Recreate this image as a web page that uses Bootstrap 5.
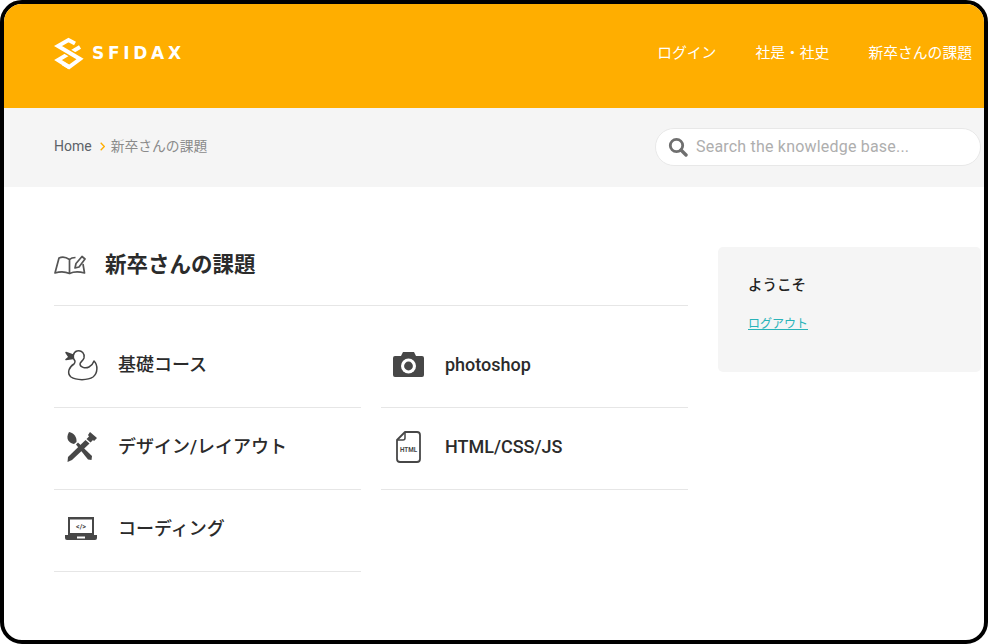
<!DOCTYPE html>
<html lang="ja">
<head>
  <meta charset="UTF-8" />
  <title>新卒さんの課題</title>
  <link href="https://cdn.jsdelivr.net/npm/bootstrap@5.3.0/dist/css/bootstrap.min.css" rel="stylesheet">
  <style>
    html, body {
      height: 100%;
      margin: 0;
      overflow: hidden;
      background: #fff;
      font-family: Roboto, "Noto Sans CJK JP", sans-serif;
    }

    .frame-box {
      height: 644px;
      border: 4px solid #000;
      border-radius: 22px;
      overflow: hidden;
      background: #fff;
    }

    .site-head {
      height: 104px;
      background: #ffae00;
      padding: 0 12px 6px 50px;
    }

    .logo-text {
      font-family: "DejaVu Sans", sans-serif;
      font-size: 17px;
      font-weight: 700;
      letter-spacing: 3.700px;
      color: #fff;
      line-height: 1;
    }

    .head-nav { column-gap: 39px; }

    .head-link {
      color: #fff;
      font-size: 14.800px;
      text-decoration: none;
    }

    .crumb-band {
      height: 79px;
      background: #f5f5f5;
      padding: 0 3px 2px 50px;
    }

    .crumb-home { color: #5c6268; font-size: 14px; text-decoration: none; }
    .crumb-now { color: #8a8a8a; font-size: 13.800px; margin-left: 6px; }

    .search-pill {
      width: 326px;
      height: 38px;
      margin-top: 1px;
      background: #fff;
      border: 1px solid #e8e8e8;
      border-radius: 20px;
      padding-left: 12px;
      column-gap: 6px;
    }

    .search-pill input {
      border: 0;
      outline: 0;
      background: transparent;
      flex: 1;
      min-width: 0;
      font-size: 16px;
      letter-spacing: .2px;
      color: #444;
    }

    .search-pill input::placeholder { color: #aeaeae; opacity: 1; }

    .main-wrap {
      padding: 60px 3px 0 50px;
      gap: 30px;
    }

    .main-col { width: 634px; }

    .title-row {
      height: 59px;
      border-bottom: 1px solid #e6e6e6;
      padding-bottom: 22px;
      margin-bottom: 20px;
    }

    .title-text {
      font-size: 21.500px;
      font-weight: 700;
      color: #2b2b2b;
      margin: 0 0 0 19px;
    }

    .topic-grid {
      display: grid;
      grid-template-columns: 307px 307px;
      column-gap: 20px;
    }

    .topic-item {
      height: 82px;
      border-bottom: 1px solid #e6e6e6;
      padding-bottom: 4px;
      color: #2b2b2b;
      font-size: 18px;
      font-weight: 500;
      text-decoration: none;
    }

    .topic-icon {
      width: 64px;
      flex: none;
      padding-left: 11px;
      line-height: 0;
    }

    .topic-icon-file { padding-left: 15px; }
    .topic-icon-cam { padding-left: 12px; }

    .side-col {
      width: 263px;
      height: 125px;
      background: #f5f5f5;
      border-radius: 5px;
      padding: 29px 30px;
    }

    .side-title {
      font-size: 14.500px;
      font-weight: 500;
      color: #222;
      line-height: 20px;
      margin-bottom: 19px;
    }

    .side-link {
      color: #2ab3b8;
      font-size: 12px;
      line-height: 18px;
      display: block;
    }
  </style>
</head>
<body>
  <div class="frame-box">
    <header class="site-head d-flex align-items-center justify-content-between">
      <a href="#" class="d-flex align-items-center gap-2 text-decoration-none">
        <svg width="30" height="33" viewBox="0 0 30 33" fill="none" stroke-width="4">
          <path stroke="#fff" d="M26 10 4 23 15 30"/>
          <path stroke="#ffae00" stroke-width="7" d="M4 9 26 22"/>
          <path stroke="#fff" d="M21 6.500 14.500 3 4 9 26 22 15 30 9 26.500"/>
        </svg>
        <span class="logo-text">SFIDAX</span>
      </a>
      <nav class="head-nav d-flex align-items-center">
        <a href="#" class="head-link">ログイン</a>
        <a href="#" class="head-link">社是・社史</a>
        <a href="#" class="head-link">新卒さんの課題</a>
      </nav>
    </header>

    <div class="crumb-band d-flex align-items-center justify-content-between">
      <div class="d-flex align-items-center">
        <a href="#" class="crumb-home">Home</a>
        <svg class="ms-2" width="5" height="9" viewBox="0 0 5 9" fill="none" stroke="#ffae00" stroke-width="1.300">
          <path d="M.7.700 4.300 4.500.7 8.300"/>
        </svg>
        <span class="crumb-now">新卒さんの課題</span>
      </div>
      <form class="search-pill d-flex align-items-center">
        <svg width="20" height="20" viewBox="0 0 20 20" fill="none" stroke="#6f6f6f">
          <circle cx="8.500" cy="8.500" r="6.200" stroke-width="2.800"/>
          <path d="M13 13l5 5" stroke-width="3.400" stroke-linecap="round"/>
        </svg>
        <input type="text" placeholder="Search the knowledge base...">
      </form>
    </div>

    <main class="main-wrap d-flex align-items-start">
      <section class="main-col">
        <div class="title-row d-flex align-items-center">
          <svg width="32" height="20" viewBox="0 0 32 20" fill="none" stroke="#555" stroke-width="1.700" stroke-linejoin="round">
            <path d="M1 18 5 3C8 1.500 12 2 15.500 4.500V18.500C11 16.500 6 16.500 1 18Z"/>
            <path d="M15.500 4.500C17 3 19.500 2.500 21.500 2.500M15.500 18.500C20 16.500 25 16.500 30.500 18L29 9"/>
            <path d="M21 13 22 8.500 28 1.500 31 4 25 12Z"/>
          </svg>
          <h1 class="title-text">新卒さんの課題</h1>
        </div>

        <div class="topic-grid">
          <a href="#" class="topic-item d-flex align-items-center">
            <span class="topic-icon">
              <svg width="33" height="32" viewBox="0 0 33 32" fill="none" stroke="#444" stroke-width="1.500" stroke-linejoin="round" stroke-linecap="round">
                <path d="M10 12C7 9 8 3 12 2 17 .8 20 5 19 9 18 12 15 13 15 15 15 18 20 20 24 18 26 17 28 15 29 12 33 16 33 24 28 28 23 31.500 11 31.500 6 28 1.500 24 4 18 9 15 10 14 10 13 10 12Z"/>
                <path d="M8 6 1 3.500 4 8 1 10.500 8 9.500" fill="#444"/>
              </svg>
            </span>
            <span>基礎コース</span>
          </a>
          <a href="#" class="topic-item d-flex align-items-center">
            <span class="topic-icon topic-icon-cam">
              <svg width="31" height="25" viewBox="0 0 31 25">
                <path fill="#474747" d="M2 4H8L10 0H21L23 4H29Q31 4 31 6V23Q31 25 29 25H2Q0 25 0 23V6Q0 4 2 4Z"/>
                <circle cx="15.500" cy="14" r="7.500" fill="#fff"/>
                <circle cx="15.500" cy="14" r="4.400" fill="#474747"/>
              </svg>
            </span>
            <span>photoshop</span>
          </a>
          <a href="#" class="topic-item d-flex align-items-center">
            <span class="topic-icon">
              <svg width="32" height="30" viewBox="0 0 32 30" fill="#474747">
                <path d="M4 0C9 1 12 5 11.500 10L9 12C4 11 0 7 4 0Z"/>
                <path d="M11 12.500 13 10.500 27 24 26.500 28 23 27.500Z"/>
                <path d="M25 0 32 6 29 9 28 8 25.500 10.500 21.500 7 24 4.500 23 3Z"/>
                <path d="M20.500 8 24.500 11.500 7 28 2.500 30 3 25Z"/>
              </svg>
            </span>
            <span>デザイン/レイアウト</span>
          </a>
          <a href="#" class="topic-item d-flex align-items-center">
            <span class="topic-icon topic-icon-file">
              <svg width="25" height="32" viewBox="0 0 25 32" fill="none" stroke="#474747" stroke-width="1.800" stroke-linejoin="round">
                <path d="M9 1H21Q24 1 24 4V28Q24 31 21 31H4Q1 31 1 28V9Z"/>
                <path d="M9 1V7Q9 9 7 9H1" stroke-width="1.500"/>
                <text x="12.500" y="21" text-anchor="middle" font-family="Roboto, sans-serif" font-size="6.300" font-weight="700" fill="#474747" stroke="none">HTML</text>
              </svg>
            </span>
            <span>HTML/CSS/JS</span>
          </a>
          <a href="#" class="topic-item d-flex align-items-center">
            <span class="topic-icon">
              <svg width="32" height="23" viewBox="0 0 32 23">
                <path fill="#474747" d="M3 0H29V18H32V21Q32 23 30 23H2Q0 23 0 21V18H3Z"/>
                <rect x="5" y="2.500" width="22" height="13.500" fill="#fff"/>
                <rect x="12" y="19.500" width="8" height="2" fill="#fff"/>
                <text x="16" y="12" text-anchor="middle" font-family="Roboto, sans-serif" font-size="7" font-weight="700" fill="#474747">&lt;/&gt;</text>
              </svg>
            </span>
            <span>コーディング</span>
          </a>
        </div>
      </section>

      <aside class="side-col">
        <div class="side-title">ようこそ</div>
        <a href="#" class="side-link">ログアウト</a>
      </aside>
    </main>
  </div>
  <script src="https://cdn.jsdelivr.net/npm/bootstrap@5.3.0/dist/js/bootstrap.bundle.min.js"></script>
</body>
</html>
